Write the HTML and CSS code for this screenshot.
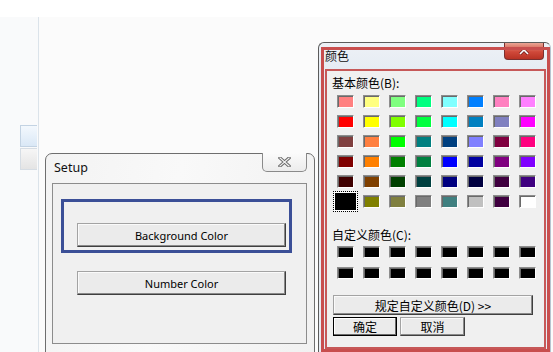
FILE: index.html
```html
<!DOCTYPE html>
<html lang="zh-CN">
<head>
  <meta charset="UTF-8">
  <title>Setup - 颜色</title>
  <link rel="stylesheet" href="styles.css">
</head>
<body>
  <div id="desk">
    <div class="topstrip"></div>
    <div class="workarea">
      <div class="side">
        <div class="tab tab-on"></div>
        <div class="tab"></div>
      </div>
      <div class="canvas"></div>
    </div>

    <!-- Setup dialog -->
    <div class="win setup">
      <div class="setup-bar">
        <span class="setup-title">Setup</span>
        <span class="close-grey">
          <svg width="13" height="10" viewBox="0 0 13 10">
            <path d="M2 1 L11 9 M11 1 L2 9" stroke="#6a6a6a" stroke-width="3.2" stroke-linecap="square"/>
            <path d="M2 1 L11 9 M11 1 L2 9" stroke="#f4f4f4" stroke-width="1.2" stroke-linecap="square"/>
          </svg>
        </span>
      </div>
      <div class="client">
        <div class="mark-blue">
          <button class="btn btn-bg">Background Color</button>
        </div>
        <button class="btn btn-num">Number Color</button>
      </div>
    </div>

    <!-- 颜色 dialog -->
    <div class="win colorwin">
      <div class="cw-bar">
        <span class="cw-title">颜色</span>
        <span class="close-red">
          <svg width="12" height="8" viewBox="0 0 12 8">
            <path d="M2 7 L6 3 L10 7" fill="none" stroke="#6b1d1d" stroke-width="3"/>
            <path d="M2 7 L6 3 L10 7" fill="none" stroke="#ffffff" stroke-width="1.6"/>
          </svg>
        </span>
      </div>
      <div class="cw-client">
        <div class="lbl">基本颜色(B):</div>
        <div class="grid basic" id="basic"></div>
        <div class="lbl lbl-custom">自定义颜色(C):</div>
        <div class="grid custom" id="custom"></div>
        <button class="btn btn-wide">规定自定义颜色(D) &gt;&gt;</button>
        <div class="btn-row">
          <button class="btn btn-ok">确定</button>
          <button class="btn btn-cancel">取消</button>
        </div>
      </div>
      <div class="mark-red"></div>
    </div>
  </div>

  <script>
    const basicColors = [
      "#ff8080", "#ffff80", "#80ff80", "#00ff80", "#80ffff", "#0080ff", "#ff80c0", "#ff80ff",
      "#ff0000", "#ffff00", "#80ff00", "#00ff40", "#00ffff", "#0080c0", "#8080c0", "#ff00ff",
      "#804040", "#ff8040", "#00ff00", "#008080", "#004080", "#8080ff", "#800040", "#ff0080",
      "#800000", "#ff8000", "#008000", "#008040", "#0000ff", "#0000a0", "#800080", "#8000ff",
      "#400000", "#804000", "#004000", "#004040", "#000080", "#000040", "#400040", "#400080",
      "#000000", "#808000", "#808040", "#808080", "#408080", "#c0c0c0", "#400040", "#ffffff"
    ];

    function fillGrid(id, colors, selected) {
      const grid = document.getElementById(id);
      colors.forEach(function (c, i) {
        const cell = document.createElement("span");
        cell.className = "sw" + (i === selected ? " sw-sel" : "");
        cell.style.background = c;
        grid.appendChild(cell);
      });
    }

    fillGrid("basic", basicColors, 40);
    fillGrid("custom", new Array(16).fill("#000000"), -1);
  </script>
</body>
</html>
```

FILE: styles.css
```css
body {
  margin: 0;
  font-family: "Noto Sans", "Noto Sans CJK SC", sans-serif;
  background: #fcfcfc;
}
#desk {
  position: relative;
  width: 553px;
  height: 352px;
  overflow: hidden;
}
.topstrip {
  height: 17px;
  background: #ffffff;
}
.workarea {
  display: flex;
  height: 335px;
}
.side {
  width: 39px;
  border-right: 1px solid #dbe3ea;
  background: #f9fafb;
  padding-top: 108px;
  box-sizing: border-box;
}
.canvas {
  flex: 1;
  background: #fbfbfb;
}
.tab {
  margin-left: 20px;
  width: 17px;
  height: 22px;
  border: 1px solid #d6dde4;
  border-right: none;
  box-sizing: border-box;
  background: linear-gradient(#f6f6f6, #e4e4e4);
}
.tab-on {
  margin-bottom: 1px;
  border-color: #c3d3e3;
  background: linear-gradient(#f3f8fd, #dae8f6);
}

/* windows */
.win {
  position: absolute;
  box-sizing: border-box;
}
.setup {
  left: 45px;
  top: 153px;
  width: 270px;
  height: 210px;
  border: 1px solid #6e6e6e;
  border-radius: 7px;
  background: linear-gradient(100deg, #f3f3f3 0%, #f9f9f9 45%, #f1f1f1 100%);
}
.setup-bar {
  display: flex;
  justify-content: space-between;
  height: 29px;
}
.setup-title {
  font-size: 12.5px;
  color: #111;
  padding: 6px 0 0 8px;
  line-height: 16px;
}
.close-grey {
  display: flex;
  align-items: center;
  justify-content: center;
  width: 45px;
  height: 19px;
  margin: -1px 7px 0 0;
  box-sizing: border-box;
  border: 1px solid #8a8a8a;
  border-top: none;
  border-radius: 0 0 5px 5px;
  background: linear-gradient(#fbfbfb, #ececec);
}
.client {
  margin: 0 7px 0 6px;
  height: 161px;
  box-sizing: border-box;
  border: 1px solid #8c8c8c;
  background: #f0f0f0;
  padding: 15px 0 0 8px;
}
.mark-blue {
  width: 231px;
  height: 54px;
  box-sizing: border-box;
  border: 3px solid #3b4f97;
  padding: 21px 0 0 13px;
}
.btn {
  display: block;
  font-family: "Noto Sans", "Noto Sans CJK SC", sans-serif;
  font-size: 11px;
  color: #000;
  background: #ebebeb;
  border: 1px solid;
  border-color: #a3a3a3 #3f3f3f #3f3f3f #a3a3a3;
  box-shadow: inset -1px -1px 0 #8a8a8a, inset 1px 1px 0 #fafafa;
  padding: 0;
  box-sizing: border-box;
}
.btn-bg,
.btn-num {
  width: 209px;
  height: 24px;
}
.btn-num {
  margin: 18px 0 0 16px;
}

/* colour dialog */
.colorwin {
  left: 318px;
  top: 42px;
  width: 233px;
  height: 320px;
  border: 1px solid #5b5b5b;
  border-right-color: #b8c4d0;
  border-radius: 6px 6px 0 0;
  background: linear-gradient(#edf1f6, #e6ecf3 26px, #e6ecf3);
}
.cw-bar {
  display: flex;
  justify-content: space-between;
  height: 26px;
}
.cw-title {
  font-family: "Noto Sans CJK SC", sans-serif;
  font-size: 12px;
  line-height: 16px;
  padding: 5px 0 0 6px;
  color: #111;
}
.close-red {
  display: flex;
  align-items: center;
  justify-content: center;
  width: 40px;
  height: 17px;
  margin-right: 6px;
  box-sizing: border-box;
  border: 1px solid #7a3030;
  border-top: none;
  border-radius: 0 0 4px 4px;
  background: linear-gradient(#eaa595, #d0493a 55%, #b83224);
}
.cw-client {
  margin-left: 6px;
  width: 221px;
  height: 280px;
  box-sizing: border-box;
  border: 2px solid #c65858;
  background: #f0f0f0;
  padding: 4px 0 0 5px;
}
.lbl {
  font-family: "Noto Sans CJK SC", sans-serif;
  font-size: 12px;
  line-height: 16px;
  color: #000;
}
.lbl-custom {
  margin-top: 19px;
}
.grid {
  display: grid;
  grid-template-columns: repeat(8, 17px);
  column-gap: 9px;
  margin: 4px 0 0 5px;
}
.basic {
  grid-auto-rows: 13px;
  row-gap: 7px;
}
.custom {
  grid-auto-rows: 12px;
  row-gap: 9px;
  margin-top: 3px;
}
.sw {
  box-sizing: border-box;
  border: 1px solid;
  border-color: #8d8d8d #ffffff #ffffff #8d8d8d;
  box-shadow: inset 1px 1px 0 #6a6a6a;
}
.sw-sel {
  border-color: #000;
  box-shadow: 0 0 0 2px #000, 0 0 0 3px #fff;
  outline: 1px dotted #000;
  outline-offset: 3px;
}
.btn-wide {
  font-family: "Noto Sans CJK SC", sans-serif;
  font-size: 12px;
  width: 200px;
  height: 20px;
  margin: 16px 0 0 1px;
}
.btn-row {
  display: flex;
  gap: 3px;
  margin: 2px 0 0 1px;
}
.btn-ok,
.btn-cancel {
  font-family: "Noto Sans CJK SC", sans-serif;
  font-size: 12px;
  width: 64px;
  height: 19px;
}
.btn-ok {
  border-color: #000;
  box-shadow: inset -1px -1px 0 #6a6a6a, inset 1px 1px 0 #fff;
}
.btn-cancel {
  width: 65px;
}
.mark-red {
  position: absolute;
  left: 2px;
  top: 4px;
  width: 229px;
  height: 305px;
  box-sizing: border-box;
  border: 3px solid #c84e4e;
  pointer-events: none;
}
```
